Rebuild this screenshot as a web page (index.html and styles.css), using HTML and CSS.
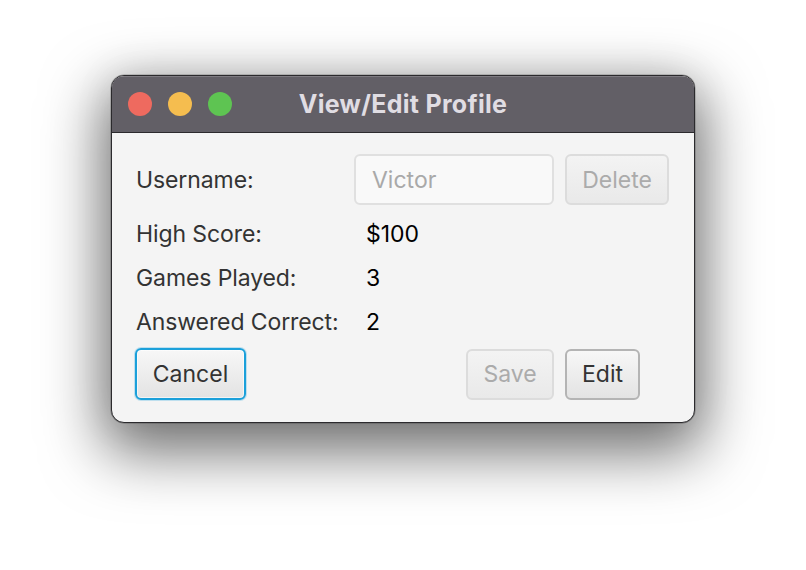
FILE: index.html
```html
<!DOCTYPE html>
<html>
<head>
<meta charset="utf-8">
<link rel="stylesheet" href="styles.css">
</head>
<body>
<div class="stage">
  <div class="window">
    <div class="titlebar">
      <div class="lights">
        <span class="light red"></span>
        <span class="light yellow"></span>
        <span class="light green"></span>
      </div>
      <div class="title">View/Edit Profile</div>
    </div>
    <div class="content">
      <div class="row row-user">
        <div class="label">Username:</div>
        <div class="field">Victor</div>
        <div class="btn disabled btn-delete">Delete</div>
      </div>
      <div class="row">
        <div class="label">High Score:</div>
        <div class="value">$100</div>
      </div>
      <div class="row">
        <div class="label">Games Played:</div>
        <div class="value">3</div>
      </div>
      <div class="row">
        <div class="label">Answered Correct:</div>
        <div class="value">2</div>
      </div>
      <div class="actions">
        <div class="btn focused btn-cancel">Cancel</div>
        <div class="spacer"></div>
        <div class="btn disabled btn-save">Save</div>
        <div class="btn btn-edit">Edit</div>
      </div>
    </div>
  </div>
</div>
</body>
</html>
```
FILE: styles.css
```css
html, body {
  margin: 0;
  padding: 0;
  background: #ffffff;
  width: 806px;
  height: 570px;
  overflow: hidden;
}

.stage {
  display: flex;
  justify-content: center;
  padding-top: 75px;
}

.window {
  width: 582px;
  height: 346px;
  border: 1px solid #2b2a2d;
  border-radius: 13px;
  background: #f4f4f4;
  overflow: hidden;
  box-shadow: 0 0 0 0.5px rgba(0,0,0,0.3), 0 22px 60px 8px rgba(0,0,0,0.55), 0 0 40px rgba(0,0,0,0.08);
  font-family: "Inter", "Liberation Sans", sans-serif;
  display: flex;
  flex-direction: column;
}

.titlebar {
  height: 56px;
  background: #625f66;
  border-bottom: 1px solid #2b2a2d;
  display: flex;
  align-items: center;
  position: relative;
  box-shadow: inset 0 1px 0 rgba(255,255,255,0.18);
}

.lights {
  display: flex;
  gap: 16px;
  padding-left: 16px;
}

.light {
  width: 24px;
  height: 24px;
  border-radius: 50%;
  display: block;
}
.red { background: #ee6a5f; }
.yellow { background: #f5bd4f; }
.green { background: #5ec452; }

.title {
  position: absolute;
  left: 0;
  right: 0;
  top: 13px;
  text-align: center;
  color: #e0dde3;
  font-weight: 700;
  font-size: 25px;
  letter-spacing: 0.3px;
}

.content {
  padding: 21px 0 0 24px;
  display: flex;
  flex-direction: column;
  color: #333333;
  font-size: 23px;
}

.row {
  display: flex;
  align-items: center;
  height: 44px;
}

.row-user {
  height: 51px;
  margin-bottom: 7px;
}

.label {
  width: 218px;
  letter-spacing: -0.1px;
}

.value {
  color: #000000;
  padding-left: 12px;
}

.field {
  box-sizing: border-box;
  width: 200px;
  height: 51px;
  border: 2px solid #e0e0e0;
  border-radius: 6px;
  background: #f9f9f9;
  color: #a9a9a9;
  display: flex;
  align-items: center;
  padding-left: 16px;
}

.btn {
  box-sizing: border-box;
  height: 51px;
  border-radius: 6px;
  display: flex;
  align-items: center;
  justify-content: center;
  border: 2px solid #b4b4b4;
  background: linear-gradient(#f7f7f7, #e3e3e3);
  color: #333333;
}

.btn.disabled {
  border-color: #dcdcdc;
  background: linear-gradient(#f3f3f3, #e9e9e9);
  color: #ababab;
}

.btn-delete {
  width: 104px;
  margin-left: 11px;
}

.actions {
  display: flex;
  align-items: center;
  margin-top: 4px;
  width: 505px;
  margin-left: -1px;
}

.spacer { flex: 1; }

.btn-cancel {
  width: 111px;
  height: 52px;
  border: 2px solid #1ba0da;
  box-shadow: 0 0 0 1px rgba(27,160,218,0.25), inset 0 0 0 1px rgba(255,255,255,0.6);
}

.btn-save {
  width: 88px;
}

.btn-edit {
  width: 75px;
  margin-left: 11px;
}
```
